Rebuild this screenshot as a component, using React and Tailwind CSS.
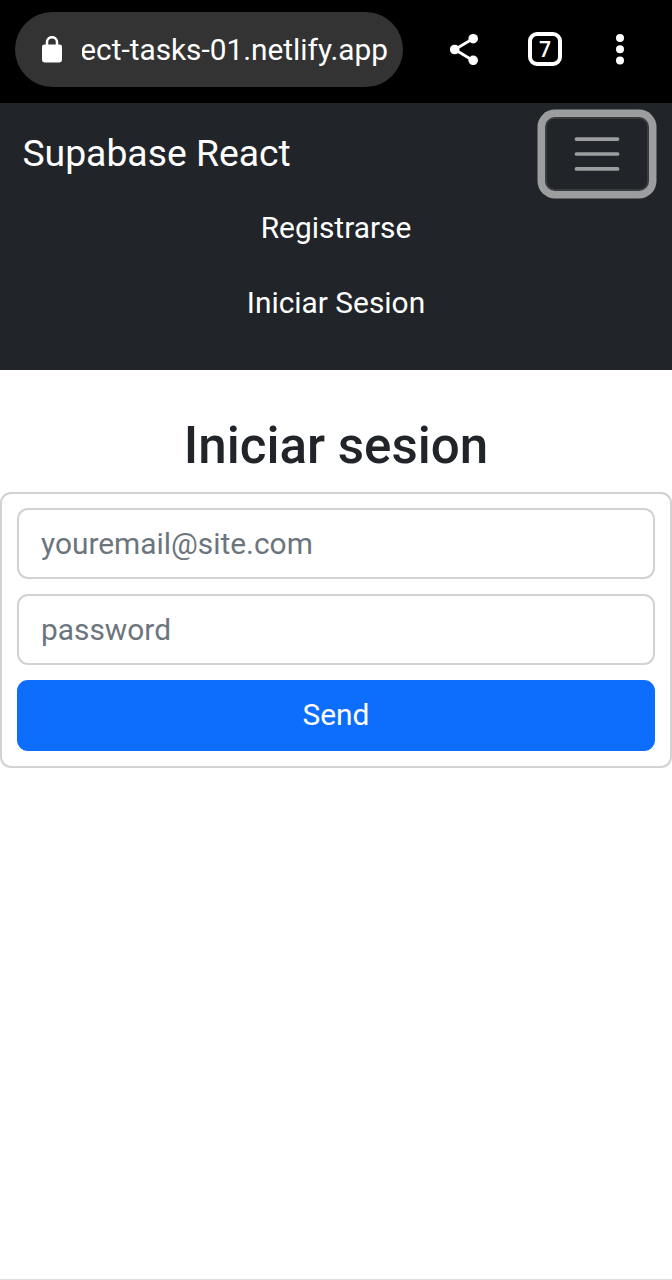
function BrowserBar() {
  return (
    <header className="flex h-[103px] items-start bg-black pt-3 pl-[15px]">
      <div className="flex h-[74.5px] w-[388px] items-center rounded-full bg-[#333333] pl-[27px]">
        <svg className="h-[27px] w-5 shrink-0" viewBox="0 0 20 27" fill="none">
          <path d="M5 10V6.2a5 5 0 0 1 10 0V10" stroke="white" strokeWidth="2.5" />
          <rect x="0" y="8.4" width="20" height="18" rx="2.4" fill="white" />
        </svg>
        <div className="mt-[2px] ml-[20px] flex w-[306px] justify-end overflow-hidden text-[29.8px] leading-[40px] whitespace-nowrap">
          ect-tasks-01.netlify.app
        </div>
      </div>
      <svg className="mt-[21px] ml-[47px] h-8 w-[28px] shrink-0" viewBox="0 0 28 32">
        <path d="M23 5.7 4.7 16.5 23 27.5" fill="none" stroke="white" strokeWidth="2.8" />
        <circle cx="23.2" cy="5.7" r="4.8" fill="white" />
        <circle cx="4.7" cy="16.5" r="4.8" fill="white" />
        <circle cx="23.2" cy="27.3" r="4.8" fill="white" />
      </svg>
      <div className="mt-5 ml-[50px] flex size-[34px] shrink-0 items-center justify-center rounded-[9px] border-[4px] border-white font-['Open_Sans',sans-serif] text-[21px] leading-none font-semibold">
        7
      </div>
      <svg className="mt-[21px] ml-[53px] h-8 w-[10px] shrink-0" viewBox="0 0 10 32" fill="white">
        <circle cx="5" cy="5" r="4" />
        <circle cx="5" cy="16.2" r="4" />
        <circle cx="5" cy="27.4" r="4" />
      </svg>
    </header>
  );
}

function Navbar() {
  return (
    <nav className="h-[267px] bg-[#212529] px-[22.4px] pt-[13.5px]">
      <div className="flex h-[74.5px] items-center justify-between">
        <a className="pb-[1.5px] text-[37.33px] leading-[56px]">Supabase React</a>
        <button
          type="button"
          aria-label="Menu"
          className="mr-[0.6px] flex h-[74.5px] w-[104px] items-center justify-center rounded-[10px] border-2 border-white/10 ring-[7.5px] ring-[#9b9d9f]"
        >
          <svg className="size-14" viewBox="0 0 30 30">
            <path
              d="M4 7h22M4 15h22M4 23h22"
              stroke="#9b9d9f"
              strokeWidth="2"
              strokeLinecap="round"
            />
          </svg>
        </button>
      </div>
      <ul className="text-center text-[29.87px] leading-[44.8px]">
        <li className="py-[15px]">Registrarse</li>
        <li className="py-[15px]">Iniciar Sesion</li>
      </ul>
    </nav>
  );
}

const inputClass =
  "block h-[71px] w-full shrink-0 rounded-[11px] border-2 border-[#d0d3d6] bg-white px-[22px] text-[29.87px] text-[#212529] outline-none placeholder:text-[#6c757d]";

export default function App() {
  return (
    <div className="flex h-[1280px] w-[672px] flex-col overflow-hidden border-b border-[#dddddd] bg-white font-[Roboto,sans-serif] text-white">
      <BrowserBar />
      <Navbar />
      <main>
        <h1 className="mt-[45px] text-center text-[51.1px] leading-[61px] font-medium text-[#212529]">
          Iniciar sesion
        </h1>
        <form className="mt-[15.5px] flex h-[276.5px] flex-col gap-[15px] rounded-[11px] border-2 border-[#d2d2d2] px-[15px] pt-[14.5px]">
          <input type="email" placeholder="youremail@site.com" className={inputClass} />
          <input type="password" placeholder="password" className={inputClass} />
          <button
            type="button"
            className="h-[71px] w-full shrink-0 rounded-[11px] bg-[#0d6efd] text-[29.87px] leading-[44.8px]"
          >
            Send
          </button>
        </form>
      </main>
    </div>
  );
}
